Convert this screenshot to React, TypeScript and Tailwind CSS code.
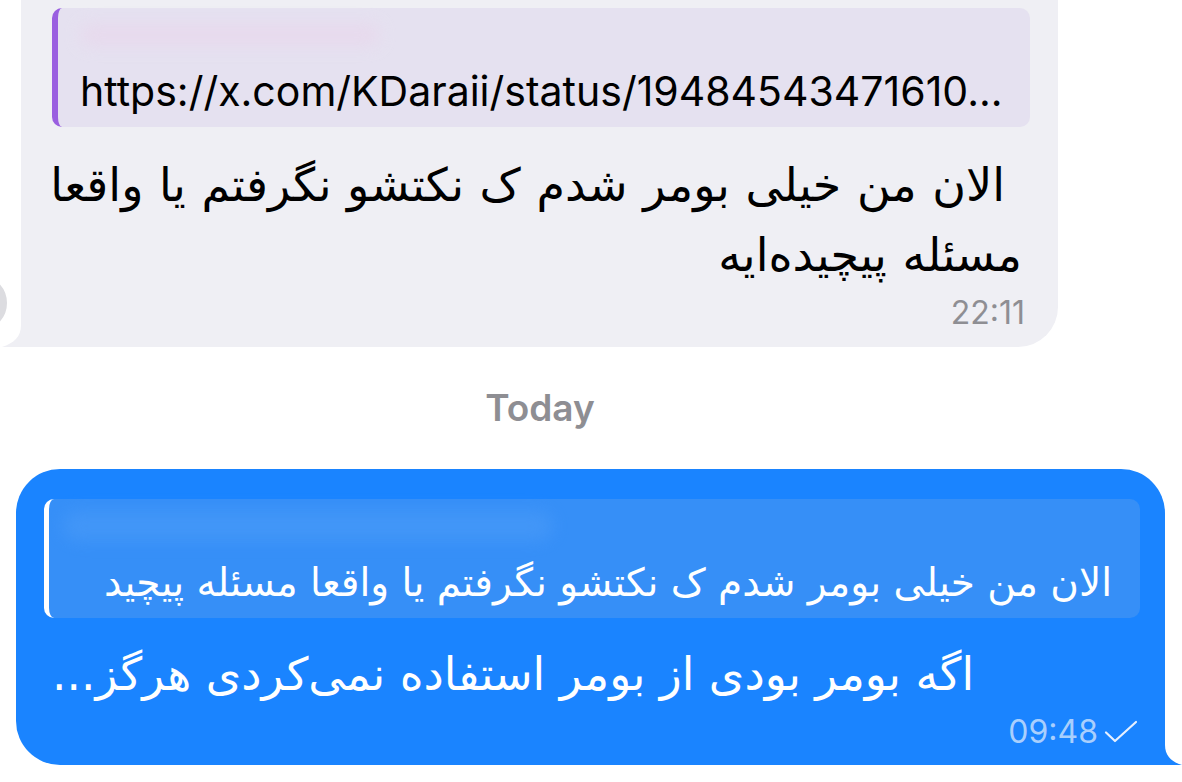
import React from 'react';

const fa = { fontFamily: '"DejaVu Sans", "Noto Sans", sans-serif' };
const latin = { fontFamily: 'Inter, "Liberation Sans", sans-serif' };

const App: React.FC = () => {
  return (
    <div className="relative w-[1182px] h-[782px] overflow-hidden bg-white">
      {/* edge of avatar peeking in */}
      <div className="absolute left-[-54px] top-[270px] w-[66px] h-[66px] rounded-full bg-[#dcdce0] border-[5px] border-white" />

      {/* incoming bubble */}
      <div className="pl-[21px]">
        <div className="relative w-[1037px] h-[347px] bg-[#efeff4] rounded-br-[40px] pt-[8px] pl-[31px] pr-[28px]">
          <svg className="absolute left-[-21px] bottom-0" width="60" height="50" viewBox="0 0 60 50">
            <path d="M21 0 V28 C21 40 14 46 2 50 H60 V0 Z" fill="#efeff4" />
          </svg>

          {/* quoted link */}
          <div className="h-[119px] rounded-[10px] border-l-[6px] border-[#9a5fe0] bg-[#e5e1f0] pl-[22px] pr-4 flex flex-col">
            <div className="mt-[16px] h-[22px] w-[300px] rounded-full bg-[#e9d7ec] blur-sm opacity-70" />
            <div className="mt-[21px] text-[41px] leading-[48px] text-black whitespace-nowrap" style={latin}>
              https://x.com/KDaraii/status/19484543471610...
            </div>
          </div>

          {/* message */}
          <div dir="rtl" className="mt-[23px] text-[46px] leading-[70px] text-black [word-spacing:1px]" style={fa}>
            <div className="mr-[25px] whitespace-nowrap">الان من خیلی بومر شدم ک نکتشو نگرفتم یا واقعا</div>
            <div className="mr-[8px] whitespace-nowrap">مسئله پیچیده‌ایه</div>
          </div>

          <div className="mt-[5px] text-right text-[32px] leading-[36px] text-[#8e8e93] mr-[5px]" style={latin}>
            22:11
          </div>
        </div>
      </div>

      {/* date separator */}
      <div className="mt-[39px] pr-[102px] text-center text-[37px] leading-[44px] font-semibold text-[#8e8e93]" style={latin}>
        Today
      </div>

      {/* outgoing bubble */}
      <div className="mt-[39px] pl-[16px]">
        <div className="relative w-[1149px] h-[296px] bg-[#1a84ff] rounded-tl-[44px] rounded-tr-[44px] rounded-bl-[44px] rounded-br-[20px] pt-[30px] pl-[28px] pr-[25px]">
          <svg className="absolute right-[-17px] bottom-0" width="40" height="50" viewBox="0 0 40 50">
            <path d="M23 0 V30 C23 41 30 47 40 50 H0 V0 Z" fill="#1a84ff" />
          </svg>

          {/* quoted reply */}
          <div className="h-[119px] rounded-[10px] border-l-[5px] border-white bg-[#368ff7] pr-[28px] flex flex-col">
            <div className="mt-[12px] ml-[14px] h-[30px] w-[490px] rounded-full bg-[#4598f8] blur-sm opacity-80" />
            <div dir="rtl" className="mt-[18px] text-[39px] leading-[48px] text-white whitespace-nowrap" style={fa}>
              الان من خیلی بومر شدم ک نکتشو نگرفتم یا واقعا مسئله پیچید
            </div>
          </div>

          {/* message */}
          <div className="mt-[27px] flex">
            <div dir="rtl" className="ml-[8px] text-[45.5px] leading-[60px] text-white whitespace-nowrap" style={fa}>
              اگه بومر بودی از بومر استفاده نمی‌کردی هرگز...
            </div>
          </div>

          <div className="mt-[9px] flex items-center justify-end gap-[6px] mr-[2px] text-[#a9cffd]">
            <span className="text-[32px] leading-[36px]" style={latin}>09:48</span>
            <svg width="34" height="24" viewBox="0 0 34 24" fill="none">
              <path d="M2 12.5 L11 21 L32 2" stroke="#e6f0ff" strokeWidth="2.2" strokeLinecap="round" strokeLinejoin="round" />
            </svg>
          </div>
        </div>
      </div>
    </div>
  );
};

export default App;
